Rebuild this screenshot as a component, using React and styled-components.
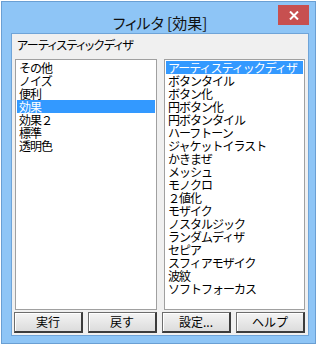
import React from "react";
import styled, { createGlobalStyle } from "styled-components";

const categories = ["その他", "ノイズ", "便利", "効果", "効果２", "標準", "透明色"];
const effects = [
  "アーティスティックディザ",
  "ボタンタイル",
  "ボタン化",
  "円ボタン化",
  "円ボタンタイル",
  "ハーフトーン",
  "ジャケットイラスト",
  "かきまぜ",
  "メッシュ",
  "モノクロ",
  "２値化",
  "モザイク",
  "ノスタルジック",
  "ランダムディザ",
  "セピア",
  "スフィアモザイク",
  "波紋",
  "ソフトフォーカス",
];
const buttons = ["実行", "戻す", "設定...", "ヘルプ"];

export default function App() {
  return (
    <>
      <GlobalStyle />
      <Window>
        <TitleBar>
          <span />
          <Title>フィルタ [効果]</Title>
          <CloseButton aria-label="close">
            <svg width="10" height="9" viewBox="0 0 10 9">
              <path d="M1 0.5 L9 8.5 M9 0.5 L1 8.5" stroke="#fff" strokeWidth="2" />
            </svg>
          </CloseButton>
        </TitleBar>
        <Client>
          <Caption>アーティスティックディザ</Caption>
          <Lists>
            <ListBox>
              {categories.map((item) => (
                <Row key={item} $selected={item === "効果"}>
                  {item}
                </Row>
              ))}
            </ListBox>
            <ListBox>
              {effects.map((item, i) => (
                <Row key={item} $selected={i === 0}>
                  {item}
                </Row>
              ))}
            </ListBox>
          </Lists>
          <ButtonRow>
            {buttons.map((label) => (
              <Button key={label}>{label}</Button>
            ))}
          </ButtonRow>
        </Client>
      </Window>
    </>
  );
}

const GlobalStyle = createGlobalStyle`
  body {
    margin: 0;
    background: #fff;
    font-family: "Noto Sans CJK JP", "Noto Sans", sans-serif;
  }
`;

const Window = styled.div`
  box-sizing: border-box;
  margin: 1px 0 0 1px;
  width: 315px;
  height: 343px;
  border: 1px solid #6a9fd3;
  background: #8ec5f6;
  padding: 0 6px 7px 9px;
  display: flex;
  flex-direction: column;
`;

const TitleBar = styled.div`
  height: 31px;
  display: grid;
  grid-template-columns: 1fr auto 1fr;
  align-items: start;
`;

const Title = styled.div`
  margin-top: 11px;
  font-size: 15px;
  line-height: 20px;
  color: #111;
  font-feature-settings: "palt";
  white-space: nowrap;
`;

const CloseButton = styled.div`
  justify-self: end;
  margin-top: 3px;
  width: 31px;
  height: 20px;
  background: #c75050;
  display: flex;
  align-items: center;
  justify-content: center;
`;

const Client = styled.div`
  flex: 1;
  border: 1px solid #6fa4d8;
  background: #f0f0f0;
  display: flex;
  flex-direction: column;
`;

const Caption = styled.div`
  margin: 4px 0 7px 5px;
  font-size: 12px;
  line-height: 14px;
  color: #000;
  font-feature-settings: "palt";
  letter-spacing: -0.6px;
  white-space: nowrap;
`;

const Lists = styled.div`
  margin-left: 3px;
  display: grid;
  grid-template-columns: 142px 141px;
  column-gap: 7px;
  height: 251px;
`;

const ListBox = styled.div`
  box-sizing: border-box;
  border: 1px solid #a0a0a0;
  padding: 1px;
  background: #fff;
  overflow: hidden;
`;

const Row = styled.div`
  height: 13px;
  line-height: 13px;
  padding-left: 2px;
  font-size: 12px;
  letter-spacing: -1px;
  white-space: nowrap;
  color: ${(p) => (p.$selected ? "#fff" : "#000")};
  background: ${(p) => (p.$selected ? "#3399ff" : "transparent")};
`;

const ButtonRow = styled.div`
  margin: 2px 0 0 2px;
  display: grid;
  grid-template-columns: repeat(4, 69px);
  column-gap: 5px;
`;

const Button = styled.div`
  box-sizing: border-box;
  height: 21px;
  border: 1px solid #6d6d6d;
  border-right: 2px solid #3c3c3c;
  border-bottom: 2px solid #3c3c3c;
  background: linear-gradient(#f4f4f4, #dcdcdc);
  box-shadow: inset 1px 1px 0 #fff;
  font-size: 12px;
  line-height: 18px;
  text-align: center;
  color: #000;
`;
